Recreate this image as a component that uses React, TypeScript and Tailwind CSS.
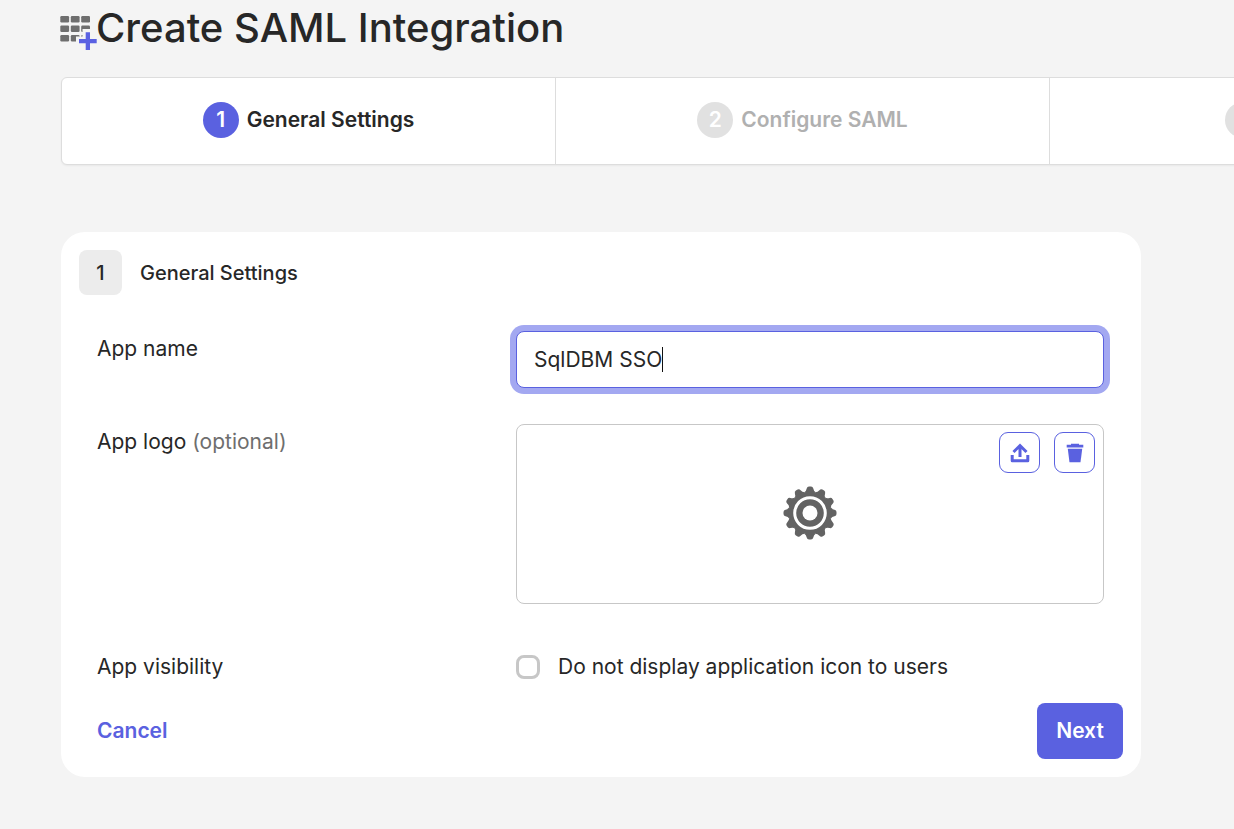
import React, { useState } from 'react';
import clsx from 'clsx';

const steps = [
  { number: 1, label: 'General Settings' },
  { number: 2, label: 'Configure SAML' },
  { number: 3, label: 'Feedback' },
];

function AppGridIcon() {
  return (
    <svg width="37" height="36" viewBox="0 0 37 36" className="shrink-0" aria-hidden="true">
      {[1, 10.5, 20].map((y) =>
        [0.3, 10.8, 21.2].map((x) => (
          <rect key={`${x}-${y}`} x={x} y={y} width="8.800" height="6.400" rx="1.200" fill="#6e6e6e" />
        ))
      )}
      {/* Plus sign with a gap cut out of the grid */}
      <path d="M22.500 14h11v20h-17.500v-12.500h6.500z" fill="#f4f4f4" />
      <path d="M25.700 17.300h4.300v6.700h6.700v4.200h-6.700v6.800h-4.300v-6.800h-6.700v-4.200h6.700z" fill="#5a61e2" />
    </svg>
  );
}

function GearIcon() {
  return (
    <svg width="54" height="54" viewBox="-27 -27 54 54" aria-hidden="true">
      <g fill="#636363">
        {[...Array(12)].map((_, i) => (
          <path
            key={i}
            d="M-6 -20.500Q-3.600 -22 -3.300 -24.500Q-2.800 -26.500 -1 -26.500H1Q2.800 -26.500 3.300 -24.500Q3.600 -22 6 -20.500Z"
            transform={`rotate(${i * 30})`}
          />
        ))}
        <circle r="21.500" />
      </g>
      <circle r="15.300" fill="none" stroke="#fff" strokeWidth="3" />
      <circle r="7.500" fill="#fff" />
    </svg>
  );
}

function UploadIcon() {
  return (
    <svg width="20" height="20" viewBox="0 0 20 20" fill="none" stroke="currentColor" strokeWidth="3" aria-hidden="true">
      <path d="M10 14V2.500M3.500 9L10 2.500l6.500 6.500" />
      <path d="M2.200 12v5.800h15.600v-5.800" strokeLinejoin="round" />
    </svg>
  );
}

function TrashIcon() {
  return (
    <svg width="18" height="20" viewBox="0 0 18 20" fill="currentColor" aria-hidden="true">
      <path d="M5 .8h8v1h4.300v2.700h-16.600v-2.700h4.300z" />
      <path d="M1.800 5.800h14.400l-1.700 13.500h-11z" />
    </svg>
  );
}

export default function App() {
  const [appName, setAppName] = useState('SqlDBM SSO');
  const [focused, setFocused] = useState(false);
  const [hidden, setHidden] = useState(false);

  return (
    <div className="min-h-screen overflow-hidden bg-[#f4f4f4] pl-[61px] pb-12 font-['Inter',sans-serif] text-[#272727]">
      <header className="flex h-[77px] items-start">
        <div className="-ml-px pt-[15px]">
          <AppGridIcon />
        </div>
        <h1 className="-ml-px pt-1 text-[40px] leading-[48px] font-medium whitespace-nowrap">
          Create SAML Integration
        </h1>
      </header>

      {/* Wizard steps */}
      <ol className="flex h-[88px] w-max rounded-md border border-[#dddddd] bg-white shadow-xs">
        {steps.map((step, index) => (
          <li
            key={step.number}
            className={clsx(
              'flex items-center justify-center gap-2 pb-[3px] text-[21px] font-semibold',
              index === 0
                ? 'w-[493px] text-[#272727]'
                : 'w-[494px] border-l border-[#dddddd] text-[#b0b0b0]'
            )}
          >
            <span
              className={clsx(
                'flex size-9 items-center justify-center rounded-full text-white',
                index === 0 ? 'bg-[#5a61e0]' : 'bg-[#e1e1e1]'
              )}
            >
              {step.number}
            </span>
            <span>{step.label}</span>
          </li>
        ))}
      </ol>

      <form
        className="mt-[67px] mr-6 max-w-[1080px] rounded-3xl bg-white p-[18px]"
        onSubmit={(e) => e.preventDefault()}
      >
        <div className="flex items-center gap-[18px]">
          <span className="flex h-[45px] w-[43px] items-center justify-center rounded-lg bg-[#ececec] text-[20px] font-medium">
            1
          </span>
          <h2 className="text-[20px] font-medium">General Settings</h2>
        </div>

        <div className="mt-9 grid grid-cols-[419px_1fr] gap-y-9 pr-[19px] pl-[18px] text-[21px] leading-9">
          <label htmlFor="app-name">App name</label>
          <div className="relative">
            <input
              id="app-name"
              type="text"
              value={appName}
              onChange={(e) => setAppName(e.target.value)}
              onFocus={() => setFocused(true)}
              onBlur={() => setFocused(false)}
              className="block h-[57px] w-full rounded-lg border border-[#5a61e0] bg-white px-[17px] ring-6 ring-[#a3a8f1] outline-none"
            />
            {/* Resting caret, replaced by the native one on focus */}
            {!focused && (
              <span className="pointer-events-none absolute top-4 left-[146px] h-[25px] w-px bg-[#111111]" />
            )}
          </div>

          <span>
            App logo <span className="text-[#6e6e6e]">(optional)</span>
          </span>
          <div className="flex h-[180px] flex-col rounded-lg border border-[#c7c7c7]">
            <div className="flex justify-end gap-[14px] px-2 pt-[7px] text-[#5a61e0]">
              <button
                type="button"
                aria-label="Upload logo"
                className="flex size-[41px] items-center justify-center rounded-[9px] border border-[#5a61e0]"
              >
                <UploadIcon />
              </button>
              <button
                type="button"
                aria-label="Remove logo"
                className="flex size-[41px] items-center justify-center rounded-[9px] border border-[#5a61e0]"
              >
                <TrashIcon />
              </button>
            </div>
            <div className="flex justify-center pt-[13px]">
              <GearIcon />
            </div>
          </div>
        </div>

        <div className="mt-[45px] grid grid-cols-[419px_1fr] px-[18px] text-[21px] leading-9">
          <span>App visibility</span>
          <label className="flex items-center gap-[18px]">
            <input
              type="checkbox"
              checked={hidden}
              onChange={(e) => setHidden(e.target.checked)}
              className="size-6 appearance-none rounded-lg border-3 border-[#c7c7c7] bg-white checked:bg-[#5a61e0]"
            />
            Do not display application icon to users
          </label>
        </div>

        <div className="mt-[18px] flex items-center justify-between pl-[18px]">
          <button type="button" className="text-[21px] font-semibold text-[#5a61e0]">
            Cancel
          </button>
          <button
            type="submit"
            className="h-14 w-[86px] rounded-lg bg-[#5a61e0] text-[21px] font-semibold text-white"
          >
            Next
          </button>
        </div>
      </form>
    </div>
  );
}
